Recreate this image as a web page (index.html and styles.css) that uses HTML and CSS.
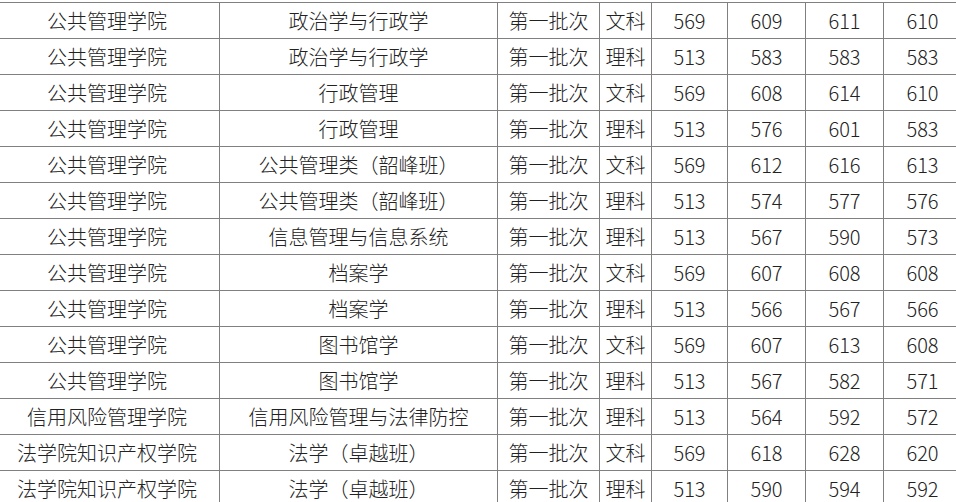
FILE: index.html
```html
<!DOCTYPE html>
<html lang="zh">
<head>
<meta charset="utf-8">
<link rel="stylesheet" href="styles.css">
</head>
<body>
<table class="scores">
<colgroup>
<col class="c-college"><col class="c-major"><col class="c-batch"><col class="c-type"><col class="c-num1"><col class="c-num"><col class="c-num"><col class="c-num">
</colgroup>
<tbody>
<tr><td>公共管理学院</td><td>政治学与行政学</td><td>第一批次</td><td>文科</td><td>569</td><td>609</td><td>611</td><td>610</td></tr>
<tr><td>公共管理学院</td><td>政治学与行政学</td><td>第一批次</td><td>理科</td><td>513</td><td>583</td><td>583</td><td>583</td></tr>
<tr><td>公共管理学院</td><td>行政管理</td><td>第一批次</td><td>文科</td><td>569</td><td>608</td><td>614</td><td>610</td></tr>
<tr><td>公共管理学院</td><td>行政管理</td><td>第一批次</td><td>理科</td><td>513</td><td>576</td><td>601</td><td>583</td></tr>
<tr><td>公共管理学院</td><td>公共管理类（韶峰班）</td><td>第一批次</td><td>文科</td><td>569</td><td>612</td><td>616</td><td>613</td></tr>
<tr><td>公共管理学院</td><td>公共管理类（韶峰班）</td><td>第一批次</td><td>理科</td><td>513</td><td>574</td><td>577</td><td>576</td></tr>
<tr><td>公共管理学院</td><td>信息管理与信息系统</td><td>第一批次</td><td>理科</td><td>513</td><td>567</td><td>590</td><td>573</td></tr>
<tr><td>公共管理学院</td><td>档案学</td><td>第一批次</td><td>文科</td><td>569</td><td>607</td><td>608</td><td>608</td></tr>
<tr><td>公共管理学院</td><td>档案学</td><td>第一批次</td><td>理科</td><td>513</td><td>566</td><td>567</td><td>566</td></tr>
<tr><td>公共管理学院</td><td>图书馆学</td><td>第一批次</td><td>文科</td><td>569</td><td>607</td><td>613</td><td>608</td></tr>
<tr><td>公共管理学院</td><td>图书馆学</td><td>第一批次</td><td>理科</td><td>513</td><td>567</td><td>582</td><td>571</td></tr>
<tr><td>信用风险管理学院</td><td>信用风险管理与法律防控</td><td>第一批次</td><td>理科</td><td>513</td><td>564</td><td>592</td><td>572</td></tr>
<tr><td>法学院知识产权学院</td><td>法学（卓越班）</td><td>第一批次</td><td>文科</td><td>569</td><td>618</td><td>628</td><td>620</td></tr>
<tr><td>法学院知识产权学院</td><td>法学（卓越班）</td><td>第一批次</td><td>理科</td><td>513</td><td>590</td><td>594</td><td>592</td></tr>
</tbody>
</table>
</body>
</html>
```

FILE: styles.css
```css
html, body {
  margin: 0;
  padding: 0;
  background: #ffffff;
  overflow: hidden;
}
.scores {
  border-collapse: collapse;
  table-layout: fixed;
  width: 967px;
  margin: 2px 0 0 -6px;
  font-family: "Noto Sans CJK SC", "Noto Sans", sans-serif;
  font-size: 20px;
  font-weight: 300;
  color: #222222;
}
.c-college { width: 225px; }
.c-major { width: 278px; }
.c-batch { width: 102px; }
.c-type { width: 52px; }
.c-num1 { width: 76px; }
.c-num { width: 78px; }
.scores td {
  border: 1px solid #808080;
  height: 35px;
  padding: 0;
  text-align: center;
  vertical-align: middle;
  white-space: nowrap;
  line-height: 35px;
}
```
